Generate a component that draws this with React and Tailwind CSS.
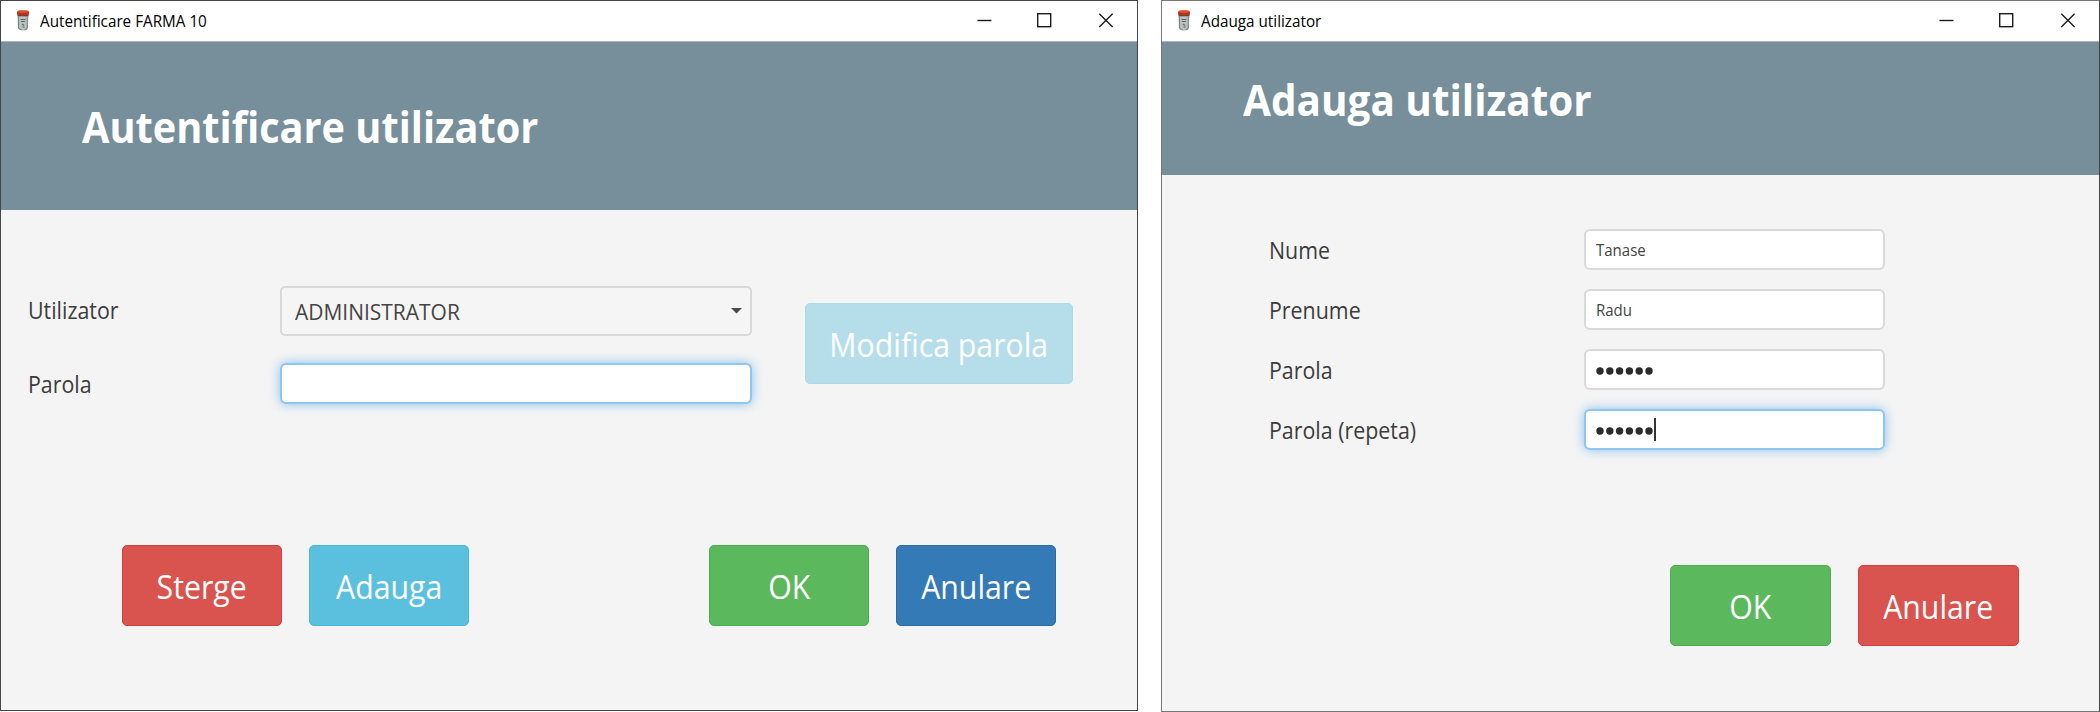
import React from "react";

function VialIcon() {
  return (
    <svg width="14" height="24" viewBox="0 0 14 24" className="shrink-0">
      <path d="M1.500 6h11l-.5 13q-1 2.500-5 2.500T2 19z" fill="#bcc1bf" />
      <path d="M2.500 7.500v11q.8 2 3.500 2.500" fill="none" stroke="#7f8785" strokeWidth="1.200" />
      <path d="M11.300 7.500v11q-.6 2-2.800 2.500" fill="none" stroke="#858d8b" strokeWidth="1.200" />
      <path d="M4.500 10.500h5M5 12.500h4M6 15l2 1.500M6.500 18h2" stroke="#5d6563" strokeWidth="1.200" />
      <rect x="1.500" y="5" width="11" height="2.300" fill="#5d4540" />
      <rect x="1" y="1.500" width="12" height="4.800" rx="2" fill="#b8321a" />
      <ellipse cx="7" cy="2.800" rx="5" ry="1.400" fill="#e3492b" />
    </svg>
  );
}

function TitleBar({ title }) {
  return (
    <div className="flex h-10 shrink-0 items-center bg-white pl-[15px]">
      <VialIcon />
      <span className="ml-[10px] grow origin-left scale-x-[0.953] whitespace-nowrap text-[16px] leading-6 text-black">{title}</span>
      <svg width="138" height="40" viewBox="0 0 138 40" className="mr-[22px] shrink-0" fill="none" stroke="#1c1c1c" strokeWidth="1.400">
        <path d="M0.500 19.500h14" />
        <rect x="60.700" y="12.700" width="13" height="13" />
        <path d="M122.300 12.700l13.300 13.300M135.600 12.700l-13.300 13.300" />
      </svg>
    </div>
  );
}

function Button({ children, className }) {
  return (
    <button className={`flex h-[81px] items-center justify-center whitespace-nowrap rounded-[5px] border text-[32px] leading-none text-white ${className}`}>
      <span className="scale-x-[0.945] pt-[2px]">{children}</span>
    </button>
  );
}

function Field({ focused, className, children }) {
  const ring = focused
    ? "border-[#8fc6f0] shadow-[0_0_11px_rgba(102,175,233,0.75)]"
    : "border-[#d9d9d9]";
  return <div className={`flex h-[41px] items-center rounded-[6px] border-2 bg-white ${ring} ${className}`}>{children}</div>;
}

function Dots() {
  return (
    <svg width="60" height="8" viewBox="0 0 60 8" fill="#2b2b2b" className="mt-[3px]">
      {[0, 1, 2, 3, 4, 5].map((i) => (
        <circle key={i} cx={4 + i * 9.8} cy="4" r="3.700" />
      ))}
    </svg>
  );
}

const label = "origin-left scale-x-[0.93] whitespace-nowrap text-[23px] leading-[30px] text-[#3c3c3c]";
const value = "origin-left scale-x-[0.91] text-[16.5px] text-[#444]";

function LoginWindow() {
  return (
    <section className="flex h-[711px] w-[1138px] flex-col border border-[#454545] bg-[#f4f4f4]">
      <TitleBar title="Autentificare FARMA 10" />
      <header className="flex h-[169px] shrink-0 items-center border-t border-[#a9b8c0] bg-[#778f9b] pt-[2px] pl-[81px]">
        <h1 className="origin-left scale-x-[0.913] whitespace-nowrap text-[43.5px] font-bold leading-none text-white">Autentificare utilizator</h1>
      </header>
      <div className="flex pt-[76px] pl-[27px]">
        <div className="flex w-[252px] flex-col">
          <div className={`mt-[9px] ${label}`}>Utilizator</div>
          <div className={`mt-[44px] ${label}`}>Parola</div>
        </div>
        <div className="flex w-[472px] flex-col gap-[27px]">
          <div className="flex h-[50px] items-center justify-between rounded-[5px] border-2 border-[#d8d8d8] bg-[#f5f5f5] pr-[8px] pl-[13px]">
            <span className="origin-left scale-x-[0.953] text-[22px] leading-none text-[#444]">ADMINISTRATOR</span>
            <svg width="11" height="6" viewBox="0 0 11 6" fill="#4a4a4a"><path d="M0 0h11L5.500 5.500z" /></svg>
          </div>
          <Field focused />
        </div>
        <div className="mt-[17px] ml-[53px]">
          <Button className="w-[268px] border-[#a9dbe9] bg-[#b6deea] text-[#f4f8f9]">Modifica parola</Button>
        </div>
      </div>
      <div className="mt-[141px] flex pl-[121px]">
        <Button className="w-[160px] border-[#d43f3a] bg-[#d9534f]">Sterge</Button>
        <Button className="ml-[27px] w-[160px] border-[#46b8da] bg-[#5bc0de]">Adauga</Button>
        <Button className="ml-[240px] w-[160px] border-[#4cae4c] bg-[#5cb85c]">OK</Button>
        <Button className="ml-[27px] w-[160px] border-[#2e6da4] bg-[#337ab7]">Anulare</Button>
      </div>
    </section>
  );
}

function FormRow({ name, children }) {
  return (
    <div className="flex h-[41px] items-center">
      <div className="w-[315px]">
        <div className={label}>{name}</div>
      </div>
      {children}
    </div>
  );
}

function AddUserWindow() {
  return (
    <section className="flex h-[712px] w-[939px] flex-col border border-[#77777a] border-r-[#454545] bg-[#f4f4f4]">
      <TitleBar title="Adauga utilizator" />
      <header className="h-[134px] shrink-0 border-t border-[#a9b8c0] bg-[#778f9b] pt-[36px] pl-[81px]">
        <h1 className="origin-left whitespace-nowrap text-[43.5px] font-bold leading-none text-white"><span className="inline-block origin-left scale-x-[0.93]">Adauga utilizator</span></h1>
      </header>
      <div className="flex flex-col gap-[19px] pt-[54px] pl-[107px]">
        <FormRow name="Nume">
          <Field className="w-[301px] pt-px pl-[10px]"><span className={value}>Tanase</span></Field>
        </FormRow>
        <FormRow name="Prenume">
          <Field className="w-[301px] pt-px pl-[10px]"><span className={value}>Radu</span></Field>
        </FormRow>
        <FormRow name="Parola">
          <Field className="w-[301px] pl-[10px]"><Dots /></Field>
        </FormRow>
        <FormRow name="Parola (repeta)">
          <Field focused className="w-[301px] pl-[10px]">
            <Dots />
            <span className="ml-[-2px] h-[23px] w-[1.5px] bg-[#333]" />
          </Field>
        </FormRow>
      </div>
      <div className="mt-[115px] flex gap-[27px] pl-[508px]">
        <Button className="w-[161px] border-[#4cae4c] bg-[#5cb85c]">OK</Button>
        <Button className="w-[161px] border-[#d43f3a] bg-[#d9534f]">Anulare</Button>
      </div>
    </section>
  );
}

export default function App() {
  return (
    <main className="flex h-[712px] w-[2100px] items-start gap-[23px] overflow-hidden bg-white font-['Open_Sans','Noto_Sans',sans-serif]">
      <LoginWindow />
      <AddUserWindow />
    </main>
  );
}
